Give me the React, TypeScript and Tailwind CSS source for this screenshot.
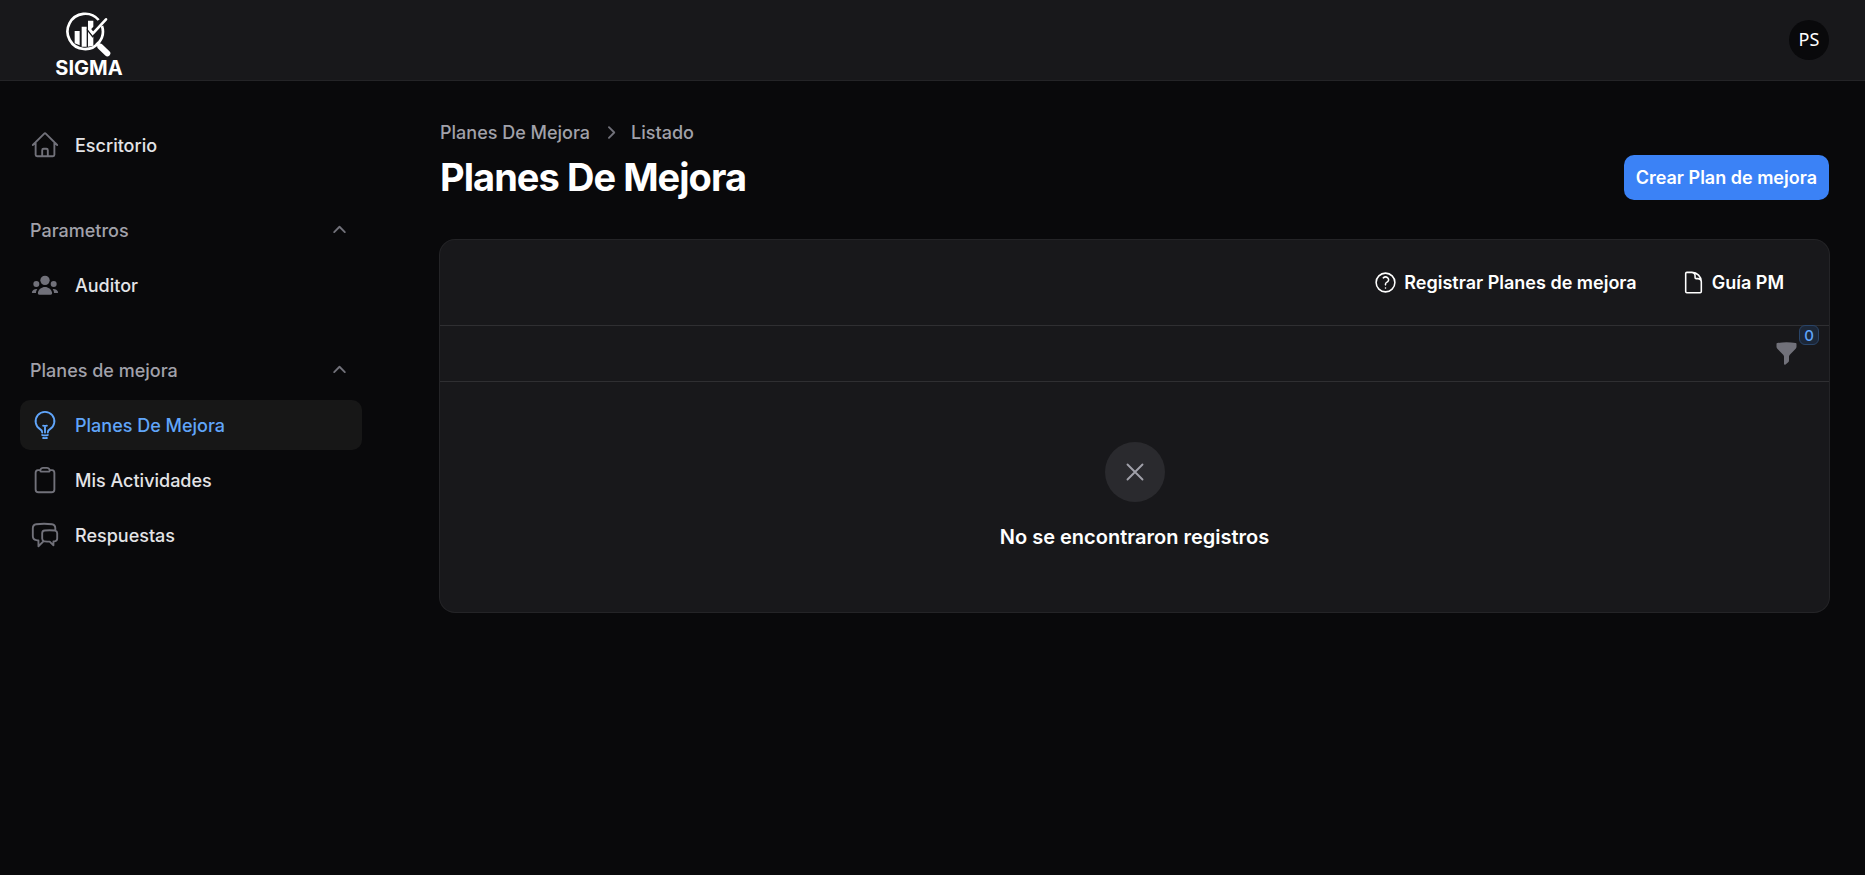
import type { ComponentType, ReactNode, SVGProps } from 'react';
import {
  HiOutlineChatBubbleLeftRight,
  HiOutlineClipboard,
  HiOutlineDocument,
  HiOutlineHome,
  HiOutlineLightBulb,
  HiOutlineQuestionMarkCircle,
  HiOutlineXMark,
} from 'react-icons/hi2';
import { clsx } from 'clsx';

type IconProps = SVGProps<SVGSVGElement>;

interface NavItem {
  label: string;
  icon: ComponentType<IconProps>;
  active?: boolean;
}

interface NavGroup {
  id: string;
  label?: string;
  items: NavItem[];
}

const ChevronIcon = (props: IconProps) => (
  <svg viewBox="0 0 20 20" fill="none" stroke="currentColor" strokeWidth="1.5" {...props}>
    <path d="M5.75 11.25 10 7l4.250 4.250" strokeLinecap="round" strokeLinejoin="round" />
  </svg>
);

const FunnelIcon = (props: IconProps) => (
  <svg viewBox="0 0 20 20" fill="currentColor" {...props}>
    <path d="M2.628 1.601C5.028 1.206 7.49 1 10 1s4.973.206 7.372.601a.75.75 0 0 1 .628.74v2.288a2.25 2.25 0 0 1-.659 1.59l-4.682 4.683a2.25 2.25 0 0 0-.659 1.59v3.037c0 .684-.31 1.33-.844 1.757l-1.937 1.55A.75.75 0 0 1 8 18.25v-5.757a2.25 2.25 0 0 0-.659-1.591L2.659 6.22A2.25 2.25 0 0 1 2 4.629V2.34a.75.75 0 0 1 .628-.74Z" />
  </svg>
);

const UserGroupIcon = (props: IconProps) => (
  <svg viewBox="0 0 90 90" fill="currentColor" {...props}>
    <circle cx="45" cy="31" r="14" />
    <circle cx="19" cy="42" r="9" />
    <circle cx="71" cy="42" r="9" />
    <path d="M28 74c-4 0-5-3-4-7 2-9 11-16 21-16s19 7 21 16c1 4 0 7-4 7z" />
    <path d="M18 69H9c-3 0-4-2-3-4 2-5 8-9 16-8-2 3-4 7-4 12zM72 69h9c3 0 4-2 3-4-2-5-8-9-16-8 2 3 4 7 4 12z" />
  </svg>
);

const navGroups: NavGroup[] = [
  { id: 'home', items: [{ label: 'Escritorio', icon: HiOutlineHome }] },
  { id: 'params', label: 'Parametros', items: [{ label: 'Auditor', icon: UserGroupIcon }] },
  {
    id: 'plans',
    label: 'Planes de mejora',
    items: [
      { label: 'Planes De Mejora', icon: HiOutlineLightBulb, active: true },
      { label: 'Mis Actividades', icon: HiOutlineClipboard },
      { label: 'Respuestas', icon: HiOutlineChatBubbleLeftRight },
    ],
  },
];

const Logo = () => (
  <a href="#" aria-label="SIGMA" className="flex w-[72px] flex-col items-center gap-px self-start pt-[11px] text-white">
    <svg viewBox="108 33 144 138" className="h-[46px] w-12" fill="none" stroke="currentColor">
      <path d="M209 60A53 53 0 1 0 219 78" strokeWidth="8" />
      <path d="m203 128 9 10" strokeWidth="10" />
      <path d="m214 140 21 20" strokeWidth="18" strokeLinecap="round" />
      <path
        d="M137 93h15v43l-15-6zM158 80h15v60h-15zM177 62h16v18l-7 8 7 8v41l-16 3z"
        fill="currentColor"
        stroke="none"
      />
      <path d="m174 88 17 22 16-16" stroke="#18181b" strokeWidth="4" />
      <path d="m181 87 11 13 39-42" strokeWidth="8" strokeLinecap="round" strokeLinejoin="round" />
    </svg>
    <span className="font-['Inter',sans-serif] text-[20px] leading-5 font-bold">SIGMA</span>
  </a>
);

const TopBar = () => (
  <header className="flex h-[81px] items-center justify-between border-b border-[#242427] bg-[#18181b] pr-9 pl-[53px]">
    <Logo />
    <button
      aria-label="Menú de usuario"
      className="flex size-10 items-center justify-center rounded-full bg-[#09090b] pb-0.5 font-['Noto_Sans',sans-serif] text-[18px] text-white"
    >
      PS
    </button>
  </header>
);

const SideBar = () => (
  <aside className="w-[400px] shrink-0 px-5">
    <nav className="flex w-[342px] flex-col gap-[35px]">
      {navGroups.map((group) => (
        <div key={group.id} className="flex flex-col gap-[5px]">
          {group.label && (
            <button className="flex h-[50px] items-center justify-between px-2.5 text-[#a1a1aa]">
              <span className="font-medium">{group.label}</span>
              <ChevronIcon className="size-[25px] text-[#71717a]" />
            </button>
          )}
          {group.items.map(({ label, icon: Icon, active }) => (
            <a
              key={label}
              href="#"
              aria-current={active ? 'page' : undefined}
              className={clsx(
                'flex h-[50px] items-center gap-[15px] rounded-[10px] px-2.5 font-medium',
                active ? 'bg-[#171717] text-[#60a5fa]' : 'text-[#e4e4e7]',
              )}
            >
              <Icon className={clsx('size-[30px]', !active && 'text-[#71717a]')} />
              {label}
            </a>
          ))}
        </div>
      ))}
    </nav>
  </aside>
);

const HeaderLink = ({ children }: { children: ReactNode }) => (
  <a href="#" className="flex items-center gap-1.5 font-semibold text-white">
    {children}
  </a>
);

const App = () => (
  <div className="flex min-h-screen flex-col bg-[#09090b] font-['Inter',sans-serif] text-[18px] leading-[25px]">
    <TopBar />
    <div className="flex flex-1 pt-[39px]">
      <SideBar />
      <main className="flex min-w-0 flex-1 flex-col gap-10 pr-9 pl-10">
        <div className="flex items-center justify-between">
          <div>
            <nav className="mb-2.5 flex items-center gap-2 font-medium text-[#a1a1aa]">
              <a href="#">Planes De Mejora</a>
              <ChevronIcon className="size-[25px] rotate-90 text-[#71717a]" />
              <a href="#">Listado</a>
            </nav>
            <h1 className="text-[38px] leading-[45px] font-bold tracking-tight text-white">
              Planes De Mejora
            </h1>
          </div>
          <button className="mt-[35px] h-[45px] rounded-[10px] bg-[#3b82f6] px-3 font-semibold text-white">
            Crear Plan de mejora
          </button>
        </div>
        <section className="rounded-[15px] bg-[#18181b] ring-1 ring-[#242427]">
          <div className="flex h-[85px] items-center justify-end gap-11 pr-[45px]">
            <HeaderLink>
              <HiOutlineQuestionMarkCircle className="size-[25px]" />
              Registrar Planes de mejora
            </HeaderLink>
            <HeaderLink>
              <HiOutlineDocument className="size-[25px]" />
              Guía PM
            </HeaderLink>
          </div>
          <div className="flex h-[57px] items-center justify-end border-y border-[#2f2f32] pr-[30px]">
            <button aria-label="Filtrar" className="relative text-[#71717a]">
              <FunnelIcon className="size-[25px]" />
              <span className="absolute -top-4 left-[25px] flex size-5 items-center justify-center rounded-md border border-[#294468] bg-[#1c2738] text-[15px] font-medium text-[#60a5fa]">
                0
              </span>
            </button>
          </div>
          <div className="flex flex-col items-center gap-5 py-[60px]">
            <div className="rounded-full bg-[#2a2a2e] p-[15px] text-[#a1a1aa]">
              <HiOutlineXMark className="size-[30px]" />
            </div>
            <h2 className="text-[20px] leading-[30px] font-semibold text-white">
              No se encontraron registros
            </h2>
          </div>
        </section>
      </main>
    </div>
  </div>
);

export default App;
